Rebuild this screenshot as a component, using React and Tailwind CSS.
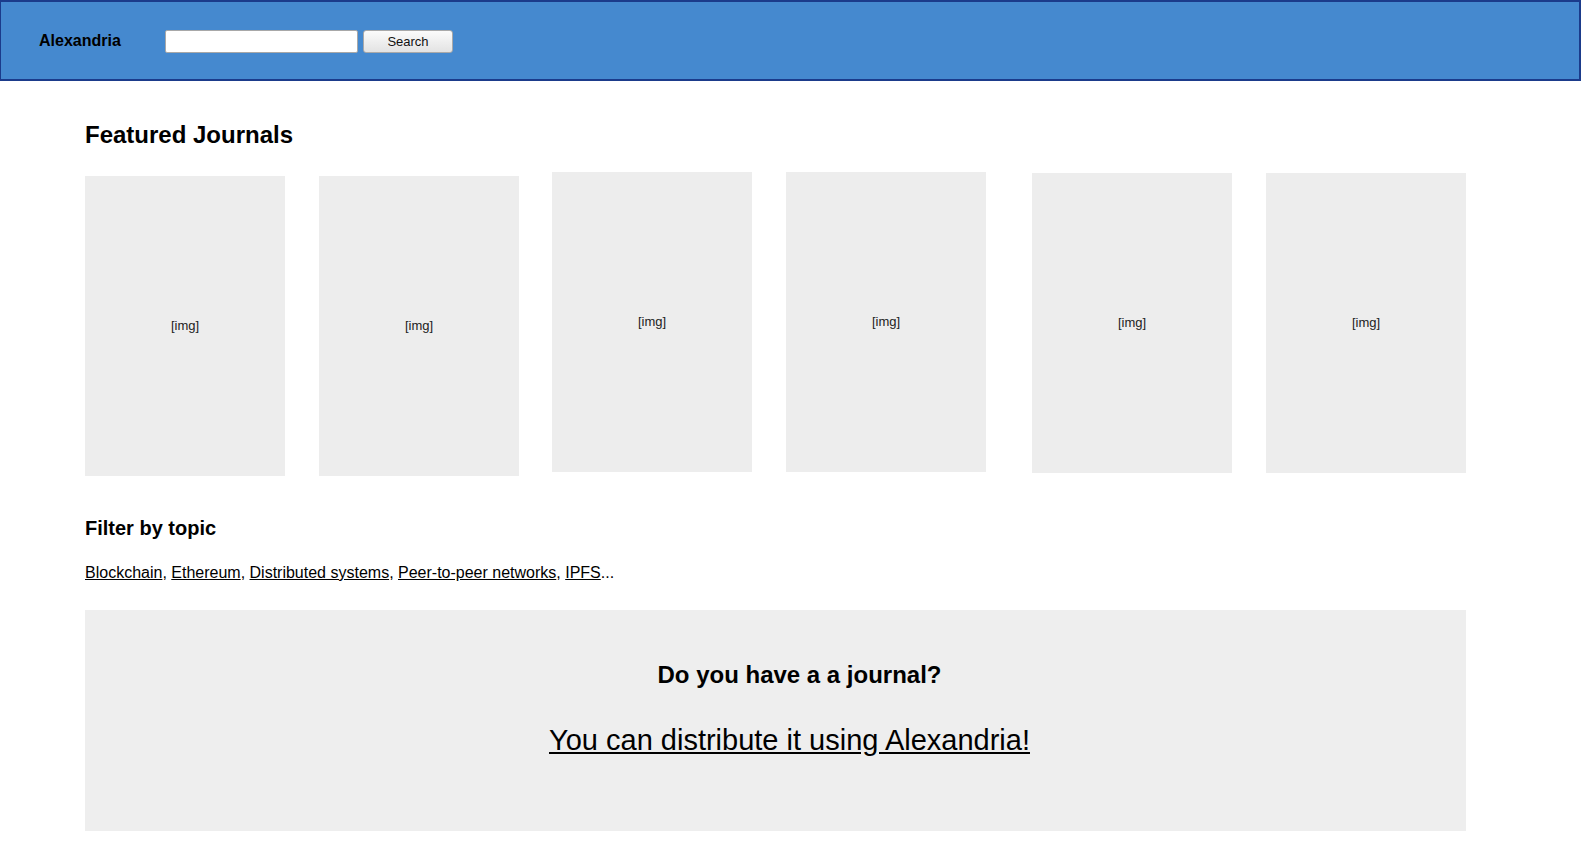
// App.jsx - Alexandria landing page

const topics = ["Blockchain", "Ethereum", "Distributed systems", "Peer-to-peer networks", "IPFS"];

// card offsets copied from the layout (left gap, top offset)
const journals = [
  { ml: "ml-0", mt: "mt-[4px]" },
  { ml: "ml-[34px]", mt: "mt-[4px]" },
  { ml: "ml-[33px]", mt: "mt-0" },
  { ml: "ml-[34px]", mt: "mt-0" },
  { ml: "ml-[46px]", mt: "mt-[1px]" },
  { ml: "ml-[34px]", mt: "mt-[1px]" },
];

function Header() {
  return (
    <header className="h-[81px] w-[1581px] bg-[#4589cf] border-t-2 border-r-2 border-b-2 border-l border-[#1b3b8b] flex items-center">
      <div className="w-[164px] pl-[38px] text-[16px] leading-[20px] font-bold text-black">Alexandria</div>
      <input
        type="text"
        className="mt-[2px] w-[193px] h-[23px] bg-white border border-[#a8a8a8] rounded-[2px] px-1 text-[13px] outline-none"
      />
      <button className="mt-[2px] ml-[5px] w-[90px] h-[23px] rounded-[3px] border border-[#a9a9a9] bg-gradient-to-b from-[#fbfbfb] to-[#e3e3e3] text-[13px] leading-none text-[#111]">
        Search
      </button>
    </header>
  );
}

export default function App() {
  return (
    <div className="min-h-screen bg-white text-black font-['Liberation_Sans',Arial,sans-serif]">
      <Header />

      <main className="pl-[85px]">
        {/* Featured Journals */}
        <h1 className="mt-[40px] text-[24px] leading-[28px] font-bold">Featured Journals</h1>
        <div className="mt-[23px] flex items-start">
          {journals.map((j, i) => (
            <div
              key={i}
              className={`${j.ml} ${j.mt} w-[200px] h-[300px] bg-[#ededed] flex items-center justify-center text-[13px] text-[#222]`}
            >
              [img]
            </div>
          ))}
        </div>

        {/* Topics */}
        <h2 className="mt-[40px] text-[20px] leading-[24px] font-bold">Filter by topic</h2>
        <p className="mt-[23px] text-[16px] leading-[20px]">
          {topics.map((t, i) => (
            <span key={t}>
              <a href="#" className="underline text-black">{t}</a>
              {i < topics.length - 1 ? ", " : "..."}
            </span>
          ))}
        </p>

        {/* Call to action */}
        <section className="mt-[27px] w-[1381px] h-[221px] bg-[#eeeeee] pt-[51px] text-center">
          <h2 className="pl-[48px] text-[24px] leading-[28px] font-bold">Do you have a a journal?</h2>
          <a href="#" className="mt-[34px] block pl-[28px] text-[29px] leading-[34px] underline text-black">
            You can distribute it using Alexandria!
          </a>
        </section>
      </main>
    </div>
  );
}
